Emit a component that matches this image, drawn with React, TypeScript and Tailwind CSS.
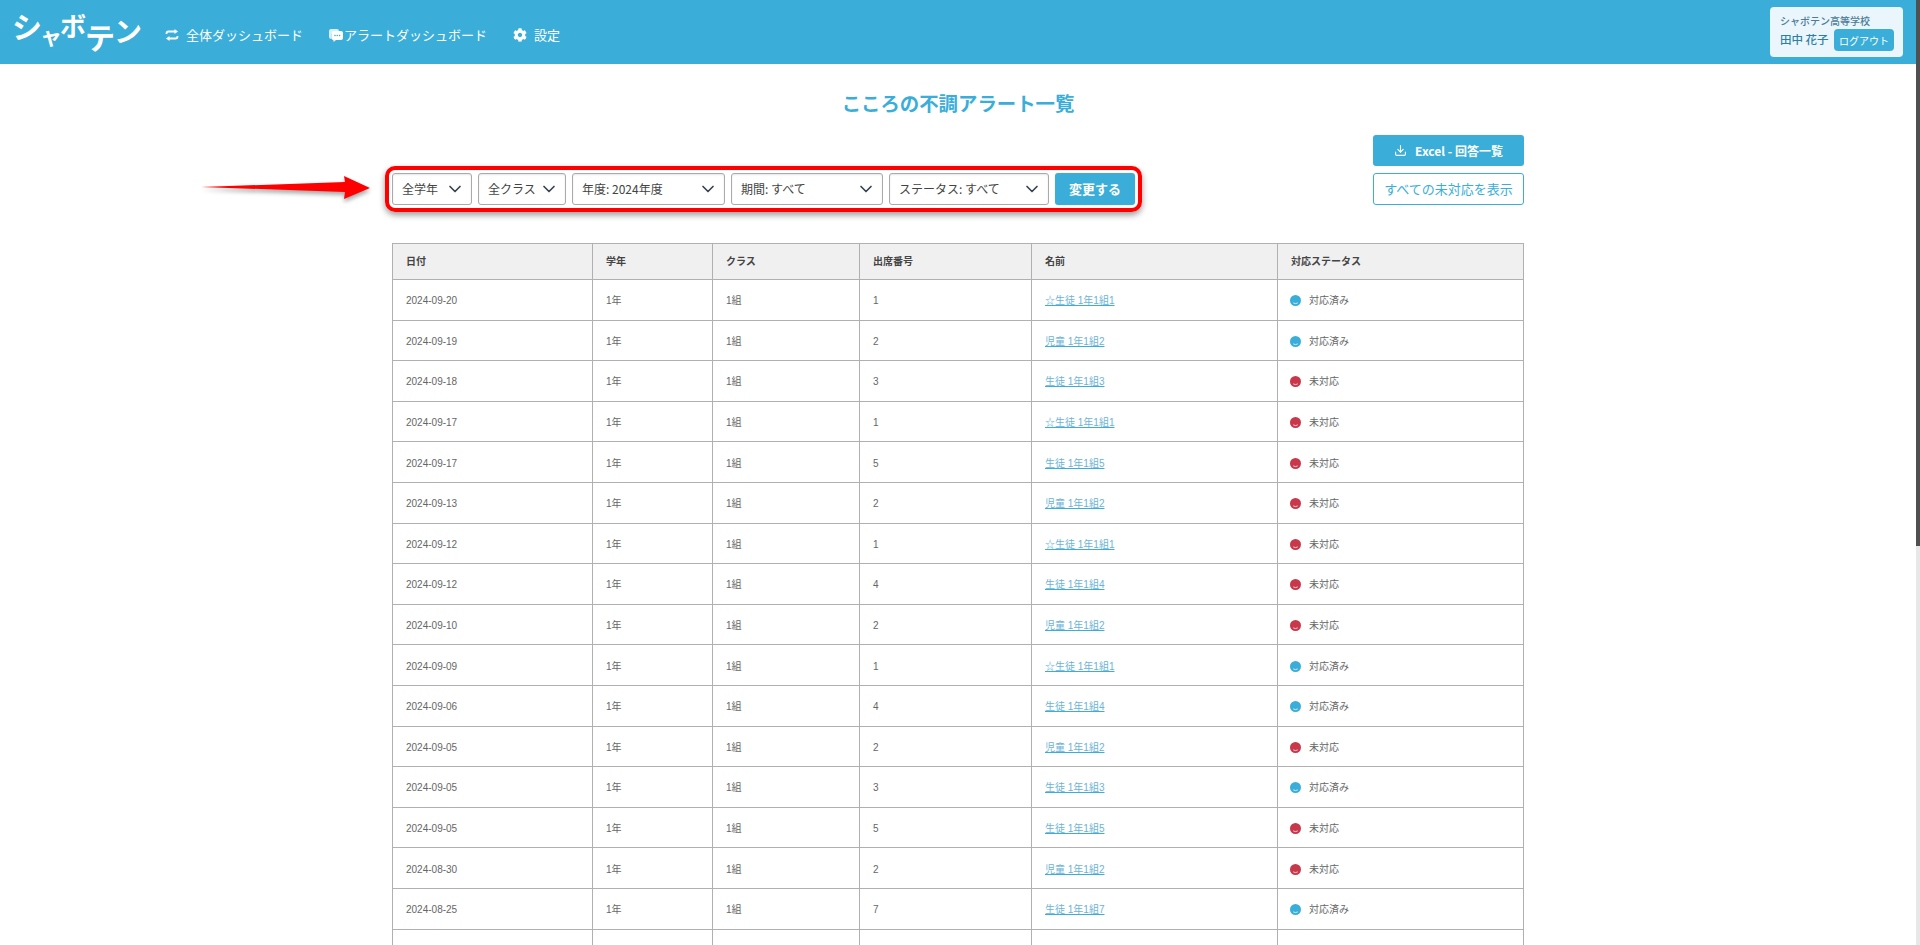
import { ChevronDown, Download } from "lucide-react";
import { FaCog } from "react-icons/fa";

const rows = [
  ["2024-09-20", "1", "☆生徒 1年1組1", true],
  ["2024-09-19", "2", "児童 1年1組2", true],
  ["2024-09-18", "3", "生徒 1年1組3", false],
  ["2024-09-17", "1", "☆生徒 1年1組1", false],
  ["2024-09-17", "5", "生徒 1年1組5", false],
  ["2024-09-13", "2", "児童 1年1組2", false],
  ["2024-09-12", "1", "☆生徒 1年1組1", false],
  ["2024-09-12", "4", "生徒 1年1組4", false],
  ["2024-09-10", "2", "児童 1年1組2", false],
  ["2024-09-09", "1", "☆生徒 1年1組1", true],
  ["2024-09-06", "4", "生徒 1年1組4", true],
  ["2024-09-05", "2", "児童 1年1組2", false],
  ["2024-09-05", "3", "生徒 1年1組3", true],
  ["2024-09-05", "5", "生徒 1年1組5", false],
  ["2024-08-30", "2", "児童 1年1組2", false],
  ["2024-08-25", "7", "生徒 1年1組7", true],
  ["2024-08-22", "3", "生徒 1年1組3", false],
] as const;

const filters = [
  ["全学年", "w-[80px]"],
  ["全クラス", "w-[88px]"],
  ["年度: 2024年度", "w-[153px]"],
  ["期間: すべて", "w-[152px]"],
  ["ステータス: すべて", "w-[160px]"],
];

const Face = ({ done }: { done: boolean }) => (
  <svg viewBox="0 0 12 12" className="w-[11px] h-[11px] shrink-0">
    <circle cx="6" cy="6" r="6" fill={done ? "#3aaed9" : "#c9374a"} />
    <path d="M3.5 8.6q2.5 1.6 5 0" fill="none" stroke="#fff" strokeWidth="0.8" />
  </svg>
);

const SwapIcon = () => (
  <svg viewBox="0 0 14 14" className="w-[14px] h-[14px] shrink-0" fill="none" stroke="#fff" strokeWidth="1.8">
    <path d="M1.5 6V5.5Q1.5 3.5 3.5 3.5H10" />
    <path d="M12.5 8V8.5Q12.5 10.5 10.5 10.5H4" />
    <path d="M9.5 1L13 3.5L9.5 6Z" fill="#fff" stroke="none" />
    <path d="M4.5 8L1 10.5L4.5 13Z" fill="#fff" stroke="none" />
  </svg>
);

const ChatIcon = () => (
  <svg viewBox="0 0 16 16" className="w-[16px] h-[16px] -ml-[1px] shrink-0">
    <path d="M1 4Q1 2 3 2H9Q11 2 11 4V5H6Q3.5 5 3.5 7.5V12Q1 12 1 10Z" fill="#fff" opacity="0.8" />
    <path d="M3.5 6.5Q3.5 4 6 4H13Q15 4 15 6V11Q15 13 13 13H8L5.5 15V13Q3.5 13 3.5 11Z" fill="#fff" />
    <circle cx="7" cy="8.5" r="0.8" fill="#3aaed9" />
    <circle cx="9.3" cy="8.5" r="0.8" fill="#3aaed9" />
    <circle cx="11.6" cy="8.5" r="0.8" fill="#3aaed9" />
  </svg>
);

const App = () => {
  return (
    <div className="h-[945px] overflow-hidden flex bg-white font-['Noto_Sans_CJK_JP','Noto_Sans',sans-serif] text-[#333]">
      <div className="flex-1 min-w-0">
        {/* Header */}
        <header className="h-[64px] bg-[#3aaed9] flex items-center text-white pl-[12px] pr-[13px]">
          <div className="h-[64px] w-[153px] shrink-0 flex items-start font-bold leading-none">
            <span className="text-[30px] mt-[10px]">シ</span>
            <span className="text-[22px] mt-[23px] -ml-[2px]">ャ</span>
            <span className="text-[26px] mt-[12px] -ml-[2px]">ボ</span>
            <span className="text-[30px] mt-[21px] -ml-[1px]">テ</span>
            <span className="text-[28px] mt-[16px] -ml-[1px]">ン</span>
          </div>
          <nav className="flex items-center text-[13px] gap-[26px] pt-[6px]">
            <div className="flex items-center gap-[7px]">
              <SwapIcon />
              全体ダッシュボード
            </div>
            <div className="flex items-center">
              <ChatIcon />
              アラートダッシュボード
            </div>
            <div className="flex items-center gap-[7px]">
              <FaCog className="w-[14px] h-[14px]" />
              設定
            </div>
          </nav>
          <div className="ml-auto w-[133px] h-[50px] bg-[#eaf6fb] rounded-[4px] pl-[10px] pr-[9px] pt-[7px] text-[#2f7fa3]">
            <div className="text-[10px] leading-[14px] font-medium text-[#4a7c99]">シャボテン高等学校</div>
            <div className="flex items-center justify-between mt-[1px] text-[11.5px]">
              <span className="font-medium">田中 花子</span>
              <span className="bg-[#3aaed9] text-white rounded-[4px] w-[60px] h-[22px] flex items-center justify-center text-[10px]">ログアウト</span>
            </div>
          </div>
        </header>

        <main className="relative w-[1132px] ml-[392px]">
          <h1 className="text-[19.4px] font-bold text-[#3aaed9] text-center leading-[28px] pt-[25px] h-[71px]">
            こころの不調アラート一覧
          </h1>

          <div className="flex justify-between items-end h-[70px]">
            {/* Filters */}
            <div className="flex items-center gap-[6px] border-[4px] border-[#ff0000] rounded-[10px] shadow-[0_3px_6px_rgba(0,0,0,0.4)] p-[3px] -ml-[7px] -mb-[7px]">
              {filters.map(([label, width]) => (
                <div key={label} className={`${width} h-[32px] border border-[#aaa] rounded-[3px] flex items-center justify-between pl-[9px] pr-[6px] text-[12px] text-[#444] shadow-[inset_0_1px_2px_rgba(0,0,0,0.1)]`}>
                  {label}
                  <ChevronDown className="w-[20px] h-[20px] text-[#374151]" strokeWidth={2} />
                </div>
              ))}
              <div className="w-[80px] h-[32px] bg-[#3aaed9] text-white rounded-[3px] flex items-center justify-center text-[13px] font-bold">変更する</div>
            </div>
            <div className="flex flex-col gap-[7px]">
              <div className="w-[151px] h-[31px] bg-[#3aaed9] text-white rounded-[3px] flex items-center justify-center gap-[8px] text-[12px] font-bold">
                <Download className="w-[13px] h-[13px]" />
                Excel - 回答一覧
              </div>
              <div className="w-[151px] h-[32px] border border-[#3aaed9] text-[#3aaed9] rounded-[3px] flex items-center justify-center text-[13px]">すべての未対応を表示</div>
            </div>
          </div>

          {/* Arrow pointing at the filters */}
          <svg className="absolute left-[-188px] top-[106px] w-[170px] h-[34px] overflow-visible" viewBox="0 0 170 34">
            <path d="M-3 17L141 12L140 6L166 18L140 29L141 22Z" fill="#ff0000" style={{ filter: "drop-shadow(0 3px 2px rgba(0,0,0,0.35))" }} />
          </svg>

          <table className="mt-[38px] w-[1132px] table-fixed border-collapse text-[10px] font-['Liberation_Sans','Noto_Sans_CJK_JP',sans-serif]">
            <thead>
              <tr className="h-[36px] bg-[#f0f0f0] font-bold text-[#444]">
                <th className="w-[200px] border border-[#b0b0b0] pl-[13px] text-left">日付</th>
                <th className="w-[120px] border border-[#b0b0b0] pl-[13px] text-left">学年</th>
                <th className="w-[147px] border border-[#b0b0b0] pl-[13px] text-left">クラス</th>
                <th className="w-[172px] border border-[#b0b0b0] pl-[13px] text-left">出席番号</th>
                <th className="w-[246px] border border-[#b0b0b0] pl-[13px] text-left">名前</th>
                <th className="border border-[#b0b0b0] pl-[13px] text-left">対応ステータス</th>
              </tr>
            </thead>
            <tbody className="text-[#666]">
              {rows.map(([date, no, name, done], i) => (
                <tr key={i} className="h-[40.6px]">
                  <td className="border border-[#b0b0b0] pl-[13px] pt-[2px]">{date}</td>
                  <td className="border border-[#b0b0b0] pl-[13px] pt-[2px]">1年</td>
                  <td className="border border-[#b0b0b0] pl-[13px] pt-[2px]">1組</td>
                  <td className="border border-[#b0b0b0] pl-[13px] pt-[2px]">{no}</td>
                  <td className="border border-[#b0b0b0] pl-[13px] pt-[2px]">
                    <span className="text-[#6db3d6] underline decoration-[#3aaed9]">{name}</span>
                  </td>
                  <td className="border border-[#b0b0b0] pl-[12px] pt-[2px]">
                    <div className="flex items-center gap-[8px]">
                      <Face done={done} />
                      {done ? "対応済み" : "未対応"}
                    </div>
                  </td>
                </tr>
              ))}
            </tbody>
          </table>
        </main>
      </div>

      {/* Scrollbar */}
      <div className="w-[4px] bg-[#e8e8e8] shrink-0">
        <div className="h-[546px] bg-[#505050]" />
      </div>
    </div>
  );
};

export default App;
